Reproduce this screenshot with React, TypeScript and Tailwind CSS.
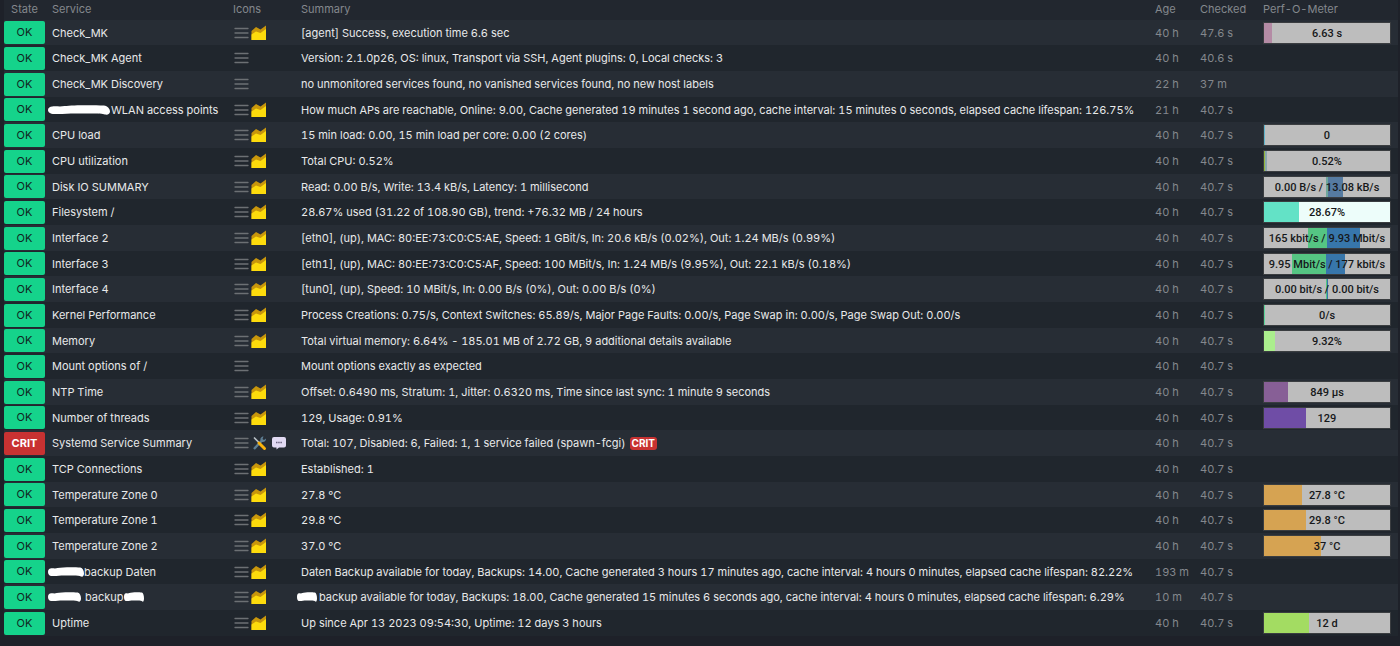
type Segment = { width: number; className: string };

type Perf = { label: string; segments: Segment[]; rest?: string };

type Service = {
  state?: "CRIT";
  name: string;
  hiddenBefore?: string;
  hiddenAfter?: string;
  icons?: "none" | "graph" | "problem";
  summary: string;
  hiddenSummary?: string;
  age?: string;
  checked?: string;
  perf?: Perf;
};

const services: Service[] = [
  {
    name: "Check_MK",
    summary: "[agent] Success, execution time 6.6 sec",
    checked: "47.6 s",
    perf: { label: "6.63 s", segments: [{ width: 6.5, className: "bg-[#b48ba5]" }] },
  },
  {
    name: "Check_MK Agent",
    icons: "none",
    summary: "Version: 2.1.0p26, OS: linux, Transport via SSH, Agent plugins: 0, Local checks: 3",
    checked: "40.6 s",
  },
  {
    name: "Check_MK Discovery",
    icons: "none",
    summary: "no unmonitored services found, no vanished services found, no new host labels",
    age: "22 h",
    checked: "37 m",
  },
  {
    name: "WLAN access points",
    hiddenBefore: "w-[62px] mr-px",
    summary:
      "How much APs are reachable, Online: 9.00, Cache generated 19 minutes 1 second ago, cache interval: 15 minutes 0 seconds, elapsed cache lifespan: 126.75%",
    age: "21 h",
  },
  {
    name: "CPU load",
    summary: "15 min load: 0.00, 15 min load per core: 0.00 (2 cores)",
    perf: { label: "0", segments: [{ width: 1, className: "bg-[#5fb4cc]" }] },
  },
  {
    name: "CPU utilization",
    summary: "Total CPU: 0.52%",
    perf: {
      label: "0.52%",
      segments: [
        { width: 1, className: "bg-[#93b83c]" },
        { width: 1, className: "bg-[#8aa5ac]" },
      ],
    },
  },
  {
    name: "Disk IO SUMMARY",
    summary: "Read: 0.00 B/s, Write: 13.4 kB/s, Latency: 1 millisecond",
    perf: {
      label: "0.00 B/s / 13.08 kB/s",
      segments: [
        { width: 49.5, className: "bg-[#bdbdbd]" },
        { width: 1, className: "bg-[#6fa79c]" },
        { width: 12.5, className: "bg-[#567ba1]" },
      ],
    },
  },
  {
    name: "Filesystem /",
    summary: "28.67% used (31.22 of 108.90 GB), trend: +76.32 MB / 24 hours",
    perf: {
      label: "28.67%",
      segments: [{ width: 27.8, className: "bg-[#63e2c6]" }],
      rest: "bg-[#edfdfa]",
    },
  },
  {
    name: "Interface 2",
    summary: "[eth0], (up), MAC: 80:EE:73:C0:C5:AE, Speed: 1 GBit/s, In: 20.6 kB/s (0.02%), Out: 1.24 MB/s (0.99%)",
    perf: {
      label: "165 kbit/s / 9.93 Mbit/s",
      segments: [
        { width: 35, className: "bg-[#bdbdbd]" },
        { width: 15, className: "bg-[#55c583]" },
        { width: 26.5, className: "bg-[#3776ab]" },
      ],
    },
  },
  {
    name: "Interface 3",
    summary: "[eth1], (up), MAC: 80:EE:73:C0:C5:AF, Speed: 100 MBit/s, In: 1.24 MB/s (9.95%), Out: 22.1 kB/s (0.18%)",
    perf: {
      label: "9.95 Mbit/s / 177 kbit/s",
      segments: [
        { width: 22.5, className: "bg-[#bdbdbd]" },
        { width: 27, className: "bg-[#55c583]" },
        { width: 14.5, className: "bg-[#3776ab]" },
      ],
    },
  },
  {
    name: "Interface 4",
    summary: "[tun0], (up), Speed: 10 MBit/s, In: 0.00 B/s (0%), Out: 0.00 B/s (0%)",
    perf: {
      label: "0.00 bit/s / 0.00 bit/s",
      segments: [
        { width: 49, className: "bg-[#bdbdbd]" },
        { width: 1, className: "bg-[#55c583]" },
        { width: 1, className: "bg-[#3776ab]" },
      ],
    },
  },
  {
    name: "Kernel Performance",
    summary:
      "Process Creations: 0.75/s, Context Switches: 65.89/s, Major Page Faults: 0.00/s, Page Swap in: 0.00/s, Page Swap Out: 0.00/s",
    perf: { label: "0/s", segments: [{ width: 1, className: "bg-[#5bd49a]" }] },
  },
  {
    name: "Memory",
    summary: "Total virtual memory: 6.64% - 185.01 MB of 2.72 GB, 9 additional details available",
    perf: { label: "9.32%", segments: [{ width: 8.8, className: "bg-[#abee8d]" }] },
  },
  { name: "Mount options of /", icons: "none", summary: "Mount options exactly as expected" },
  {
    name: "NTP Time",
    summary: "Offset: 0.6490 ms, Stratum: 1, Jitter: 0.6320 ms, Time since last sync: 1 minute 9 seconds",
    perf: { label: "849 µs", segments: [{ width: 19, className: "bg-[#875f96]" }] },
  },
  {
    name: "Number of threads",
    summary: "129, Usage: 0.91%",
    perf: { label: "129", segments: [{ width: 33, className: "bg-[#6f4da6]" }] },
  },
  {
    state: "CRIT",
    name: "Systemd Service Summary",
    icons: "problem",
    summary: "Total: 107, Disabled: 6, Failed: 1, 1 service failed (spawn-fcgi)",
  },
  { name: "TCP Connections", summary: "Established: 1" },
  {
    name: "Temperature Zone 0",
    summary: "27.8 °C",
    perf: { label: "27.8 °C", segments: [{ width: 30, className: "bg-[#d6a352]" }] },
  },
  {
    name: "Temperature Zone 1",
    summary: "29.8 °C",
    perf: { label: "29.8 °C", segments: [{ width: 33, className: "bg-[#d6a352]" }] },
  },
  {
    name: "Temperature Zone 2",
    summary: "37.0 °C",
    perf: { label: "37 °C", segments: [{ width: 45, className: "bg-[#d6a352]" }] },
  },
  {
    name: "backup Daten",
    hiddenBefore: "w-9",
    summary:
      "Daten Backup available for today, Backups: 14.00, Cache generated 3 hours 17 minutes ago, cache interval: 4 hours 0 minutes, elapsed cache lifespan: 82.22%",
    age: "193 m",
  },
  {
    name: "backup",
    hiddenBefore: "w-[33px] mr-1",
    hiddenAfter: "w-5",
    hiddenSummary: "w-5 mr-[2px]",
    summary:
      "backup available for today, Backups: 18.00, Cache generated 15 minutes 6 seconds ago, cache interval: 4 hours 0 minutes, elapsed cache lifespan: 6.29%",
    age: "10 m",
  },
  {
    name: "Uptime",
    summary: "Up since Apr 13 2023 09:54:30, Uptime: 12 days 3 hours",
    perf: { label: "12 d", segments: [{ width: 36, className: "bg-[#a3dc62]" }] },
  },
];

export default function App() {
  return (
    <main className="min-h-screen bg-[#1e2129] pl-1 pr-[2px] font-['Inter','Liberation_Sans',sans-serif] text-[11px] leading-4 tabular-nums text-[#e8e9ea]">
      <table className="w-full table-fixed border-collapse whitespace-nowrap">
        <thead>
          <tr className="h-5 bg-[#22272f] text-left align-top text-[#84888d]">
            <th className="w-[41px] p-0 pt-px text-center align-top font-normal">State</th>
            <th className="w-[188px] p-0 pt-px pl-[7px] align-top font-normal">Service</th>
            <th className="w-[68px] p-0 pt-px align-top font-normal">Icons</th>
            <th className="p-0 pt-px align-top font-normal">Summary</th>
            <th className="w-[45px] p-0 pt-px align-top font-normal">Age</th>
            <th className="w-[63px] p-0 pt-px align-top font-normal">Checked</th>
            <th className="w-[135px] p-0 pt-px align-top font-normal">Perf-O-Meter</th>
          </tr>
        </thead>
        <tbody>
          {services.map((service) => (
            <ServiceRow key={service.name} service={service} />
          ))}
        </tbody>
      </table>
    </main>
  );
}

function ServiceRow({ service }: { service: Service }) {
  const { icons = "graph", age = "40 h", checked = "40.7 s" } = service;

  return (
    <tr className="h-[26px] odd:bg-[#272d35] even:bg-[#20262d] nth-[3n+1]:h-[25px]">
      <td className="p-0">
        <StateBadge state={service.state ?? "OK"} />
      </td>
      <td className="p-0 pl-[7px]">
        <a className="flex items-center" href="#service">
          {service.hiddenBefore && <Scribble className={`-ml-1 ${service.hiddenBefore}`} />}
          {service.name}
          {service.hiddenAfter && <Scribble className={service.hiddenAfter} />}
        </a>
      </td>
      <td className="p-0">
        <div className="flex items-center gap-[2px]">
          <button aria-label="Open the action menu" type="button">
            <MenuIcon />
          </button>
          {icons === "graph" && (
            <a aria-label="Show graphs" href="#graph">
              <GraphIcon />
            </a>
          )}
          {icons === "problem" && (
            <>
              <a aria-label="Acknowledged problem" href="#problem">
                <ToolsIcon />
              </a>
              <a aria-label="Comments" href="#comments">
                <CommentIcon />
              </a>
            </>
          )}
        </div>
      </td>
      <td className="p-0">
        <div className="flex items-center">
          {service.hiddenSummary && <Scribble className={`-ml-1 ${service.hiddenSummary}`} />}
          {service.summary}
          {service.state === "CRIT" && (
            <b className="ml-1 rounded-[3px] bg-[#c83232] px-[2px] text-[10px] leading-[13px] text-white">CRIT</b>
          )}
        </div>
      </td>
      <td className="p-0 text-[#84888d]">{age}</td>
      <td className="p-0 text-[#84888d]">{checked}</td>
      <td className="p-0 pr-[7px]">{service.perf && <PerfOMeter perf={service.perf} />}</td>
    </tr>
  );
}

function StateBadge({ state }: { state: "OK" | "CRIT" }) {
  return (
    <span
      className={
        state === "OK"
          ? "block rounded-[2px] bg-[#15d38b] text-center leading-[23px] text-[#10281f]"
          : "block rounded-[2px] bg-[#c83232] text-center font-bold leading-[23px] text-white"
      }
    >
      {state}
    </span>
  );
}

function PerfOMeter({ perf }: { perf: Perf }) {
  return (
    <a className="relative block h-[22px] border border-[#3a3d40]" href="#graph">
      <span className={`flex h-full ${perf.rest ?? "bg-[#bdbdbd]"}`}>
        {perf.segments.map((segment, index) => (
          <span className={segment.className} key={index} style={{ width: `${segment.width}%` }} />
        ))}
      </span>
      <span className="absolute inset-0 text-center font-['Roboto','Liberation_Sans',sans-serif] font-medium leading-[21px] text-[#16181a]">
        {perf.label}
      </span>
    </a>
  );
}

function Scribble({ className }: { className: string }) {
  return (
    <svg className={`h-[10px] shrink-0 ${className}`} preserveAspectRatio="none" viewBox="0 0 60 10">
      <path
        d="M4 1.500 C8 1 12 2 16 1 C24 0 44 0 54 0.500 C58 1 60 4 60 6.500 C60 9 58 10 55 9.500 C52 8 40 8.500 30 8.500 C22 8 14 9.500 6 9 C2 9 0 7 0 5 C0 3 2 1.500 4 1.500 Z"
        fill="#fff"
      />
    </svg>
  );
}

function MenuIcon() {
  return (
    <svg className="block size-4" viewBox="0 0 16 16">
      <path d="M2 3.5h13M2 8h13M2 12.5h13" stroke="#6c7074" strokeLinecap="round" strokeWidth="1.3" />
    </svg>
  );
}

function GraphIcon() {
  return (
    <svg className="block size-4" viewBox="0 0 16 16">
      <path d="M0.500 6L5 2L9.500 4.500L15 0.500V15H0.500Z" fill="#c8960c" />
      <path d="M0.500 9.500L5 6.500L9.500 8L15 4V15H0.500Z" fill="#fddb0c" />
    </svg>
  );
}

function ToolsIcon() {
  return (
    <svg className="block size-4" viewBox="0 0 16 16">
      <path d="M3 14L11 5.500" stroke="#5f7f94" strokeWidth="2.400" />
      <path d="M10 6.500C8.500 4 10 1.500 12.500 1.500L11.500 4L13 5L15 3.500C15.500 6 12.500 8 10 6.500Z" fill="#5f7f94" />
      <path d="M3 2.500L9 8.500" stroke="#b9c1c6" strokeWidth="1.600" />
      <path d="M8 8L13.500 13.500" stroke="#f9b20c" strokeLinecap="round" strokeWidth="3" />
    </svg>
  );
}

function CommentIcon() {
  return (
    <svg className="ml-[2px] block size-4" viewBox="0 0 16 16">
      <path d="M3 2H13Q15 2 15 4V10.500Q15 12.500 13 12.500H8L5.500 14.500V12.500H3Q1 12.500 1 10.500V4Q1 2 3 2Z" fill="#e2daf3" />
      <path d="M5 7.500H11" stroke="#6b6380" strokeDasharray="1.500 0.700" strokeWidth="1.500" />
    </svg>
  );
}
